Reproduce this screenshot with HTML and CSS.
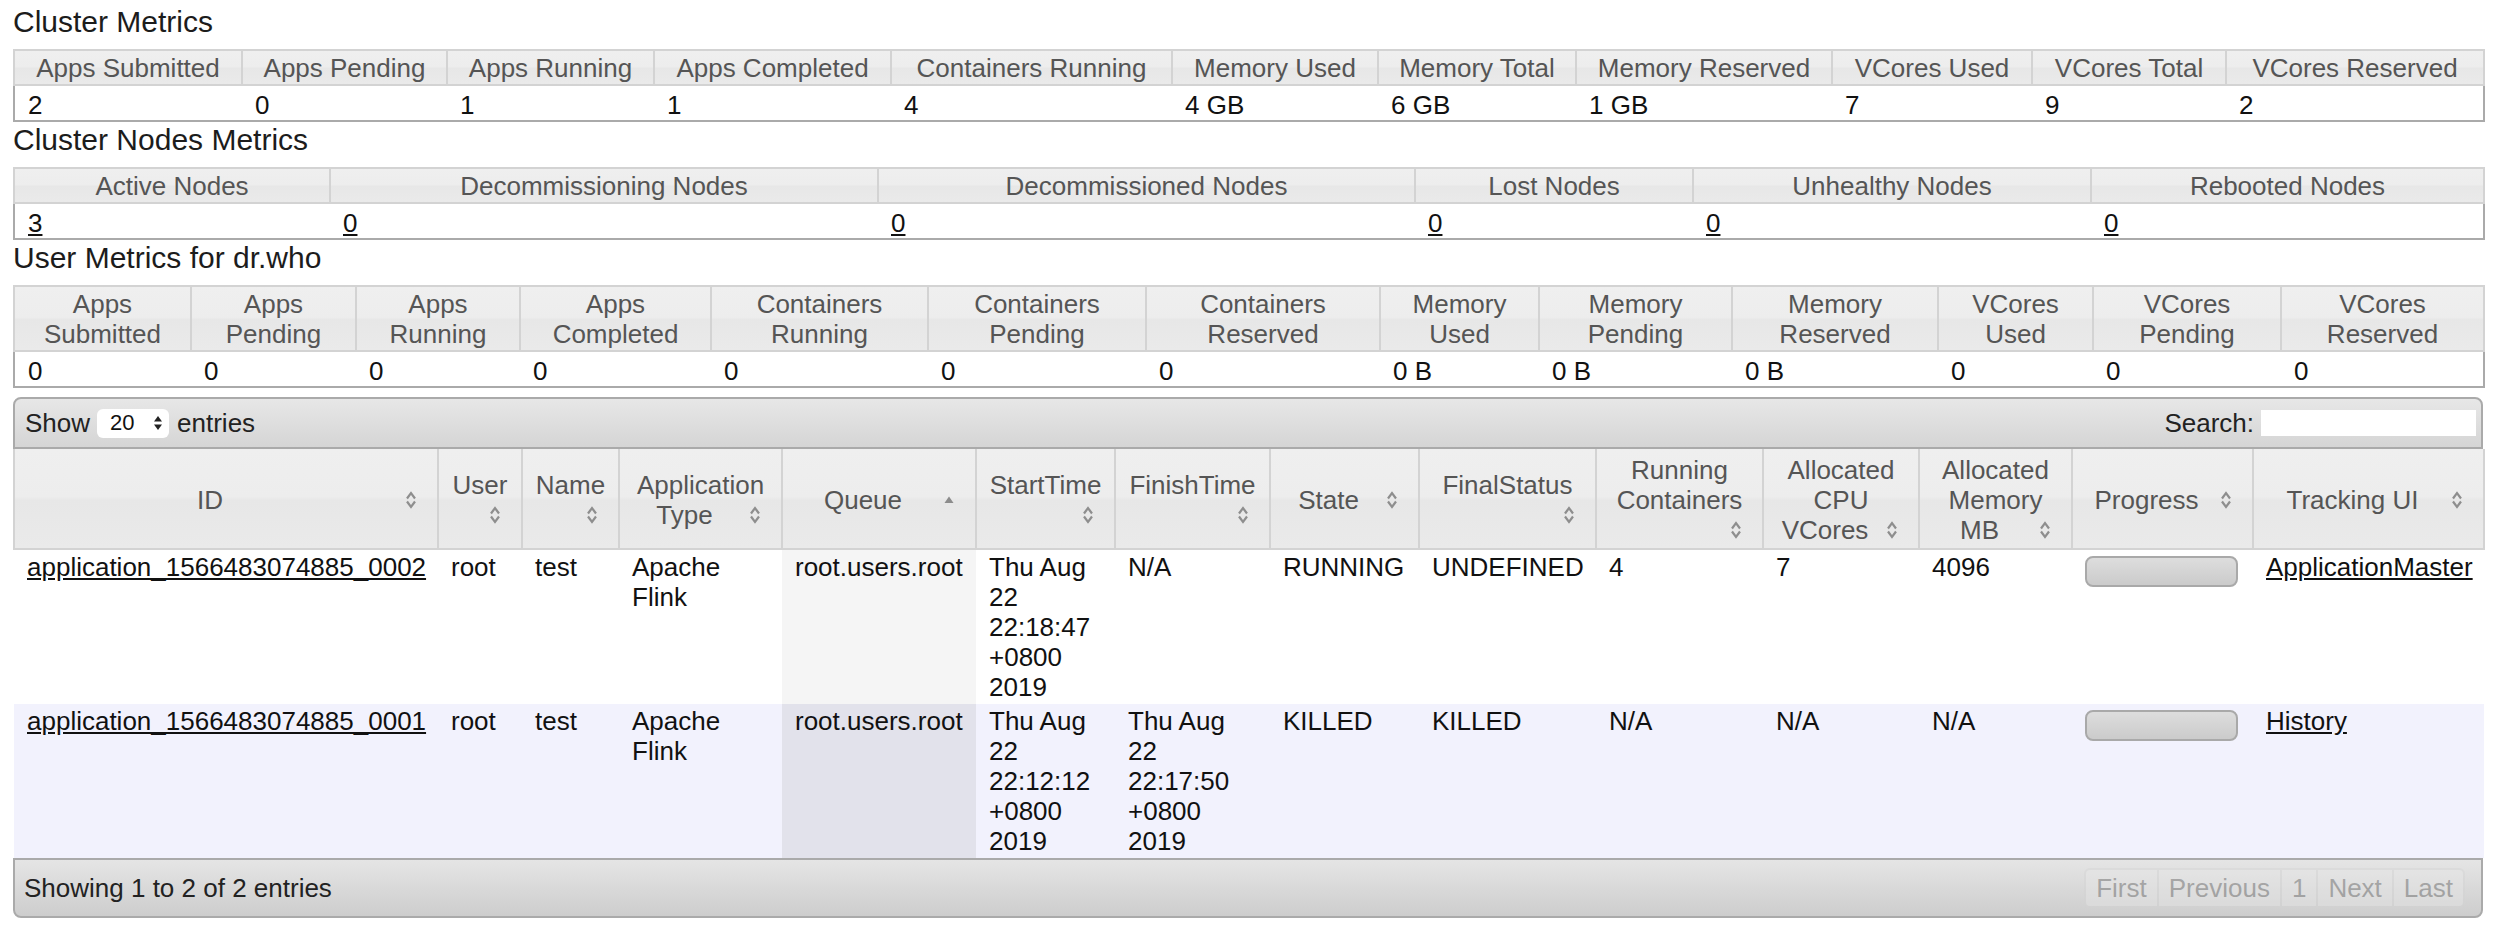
FILE: index.html
```html
<!DOCTYPE html>
<html lang="en">
<head>
<meta charset="utf-8">
<title>All Applications</title>
<link rel="stylesheet" href="styles.css">
</head>
<body>
<div class="page">
  <h3 class="section-title">Cluster Metrics</h3>
  <table class="info cluster">
    <colgroup><col><col><col><col><col><col><col><col><col><col><col></colgroup>
    <thead>
      <tr>
        <th>Apps Submitted</th><th>Apps Pending</th><th>Apps Running</th><th>Apps Completed</th><th>Containers Running</th><th>Memory Used</th><th>Memory Total</th><th>Memory Reserved</th><th>VCores Used</th><th>VCores Total</th><th>VCores Reserved</th>
      </tr>
    </thead>
    <tbody>
      <tr>
        <td>2</td><td>0</td><td>1</td><td>1</td><td>4</td><td>4 GB</td><td>6 GB</td><td>1 GB</td><td>7</td><td>9</td><td>2</td>
      </tr>
    </tbody>
  </table>

  <h3 class="section-title">Cluster Nodes Metrics</h3>
  <table class="info nodes">
    <colgroup><col><col><col><col><col><col></colgroup>
    <thead>
      <tr>
        <th>Active Nodes</th><th>Decommissioning Nodes</th><th>Decommissioned Nodes</th><th>Lost Nodes</th><th>Unhealthy Nodes</th><th>Rebooted Nodes</th>
      </tr>
    </thead>
    <tbody>
      <tr>
        <td><a href="#">3</a></td><td><a href="#">0</a></td><td><a href="#">0</a></td><td><a href="#">0</a></td><td><a href="#">0</a></td><td><a href="#">0</a></td>
      </tr>
    </tbody>
  </table>

  <h3 class="section-title">User Metrics for dr.who</h3>
  <table class="info users">
    <colgroup><col><col><col><col><col><col><col><col><col><col><col><col><col></colgroup>
    <thead>
      <tr>
        <th>Apps Submitted</th><th>Apps Pending</th><th>Apps Running</th><th>Apps Completed</th><th>Containers Running</th><th>Containers Pending</th><th>Containers Reserved</th><th>Memory Used</th><th>Memory Pending</th><th>Memory Reserved</th><th>VCores Used</th><th>VCores Pending</th><th>VCores Reserved</th>
      </tr>
    </thead>
    <tbody>
      <tr>
        <td>0</td><td>0</td><td>0</td><td>0</td><td>0</td><td>0</td><td>0</td><td>0 B</td><td>0 B</td><td>0 B</td><td>0</td><td>0</td><td>0</td>
      </tr>
    </tbody>
  </table>

  <div class="dt-wrapper">
    <div class="dt-top">
      <div class="dt-length">Show <span class="select">20 <svg class="select-arrows" width="10" height="18" viewBox="0 0 10 18"><polygon points="1,7.5 5,2 9,7.5" /><polygon points="1,10.5 5,16 9,10.5" /></svg></span> entries</div>
      <div class="dt-filter">Search: <span class="search-box"></span></div>
    </div>
    <table class="apps">
      <colgroup><col><col><col><col><col><col><col><col><col><col><col><col><col><col></colgroup>
      <thead>
        <tr>
          <th>ID<span class="sort"><svg width="32" height="30" viewBox="0 0 32 30"><polyline points="12,13.5 16,8 20,13.5" /><polyline points="12,16.5 16,22 20,16.5" /></svg></span></th>
          <th>User<span class="sort"><svg width="32" height="30" viewBox="0 0 32 30"><polyline points="12,13.5 16,8 20,13.5" /><polyline points="12,16.5 16,22 20,16.5" /></svg></span></th>
          <th>Name<span class="sort"><svg width="32" height="30" viewBox="0 0 32 30"><polyline points="12,13.5 16,8 20,13.5" /><polyline points="12,16.5 16,22 20,16.5" /></svg></span></th>
          <th>Application Type<span class="sort"><svg width="32" height="30" viewBox="0 0 32 30"><polyline points="12,13.5 16,8 20,13.5" /><polyline points="12,16.5 16,22 20,16.5" /></svg></span></th>
          <th>Queue<span class="sort"><svg width="32" height="30" viewBox="0 0 32 30"><polygon class="asc" points="11.5,18 16,11.5 20.5,18" /></svg></span></th>
          <th>StartTime<span class="sort"><svg width="32" height="30" viewBox="0 0 32 30"><polyline points="12,13.5 16,8 20,13.5" /><polyline points="12,16.5 16,22 20,16.5" /></svg></span></th>
          <th>FinishTime<span class="sort"><svg width="32" height="30" viewBox="0 0 32 30"><polyline points="12,13.5 16,8 20,13.5" /><polyline points="12,16.5 16,22 20,16.5" /></svg></span></th>
          <th>State<span class="sort"><svg width="32" height="30" viewBox="0 0 32 30"><polyline points="12,13.5 16,8 20,13.5" /><polyline points="12,16.5 16,22 20,16.5" /></svg></span></th>
          <th>FinalStatus<span class="sort"><svg width="32" height="30" viewBox="0 0 32 30"><polyline points="12,13.5 16,8 20,13.5" /><polyline points="12,16.5 16,22 20,16.5" /></svg></span></th>
          <th>Running Containers<span class="sort"><svg width="32" height="30" viewBox="0 0 32 30"><polyline points="12,13.5 16,8 20,13.5" /><polyline points="12,16.5 16,22 20,16.5" /></svg></span></th>
          <th>Allocated CPU VCores<span class="sort"><svg width="32" height="30" viewBox="0 0 32 30"><polyline points="12,13.5 16,8 20,13.5" /><polyline points="12,16.5 16,22 20,16.5" /></svg></span></th>
          <th>Allocated Memory MB<span class="sort"><svg width="32" height="30" viewBox="0 0 32 30"><polyline points="12,13.5 16,8 20,13.5" /><polyline points="12,16.5 16,22 20,16.5" /></svg></span></th>
          <th>Progress<span class="sort"><svg width="32" height="30" viewBox="0 0 32 30"><polyline points="12,13.5 16,8 20,13.5" /><polyline points="12,16.5 16,22 20,16.5" /></svg></span></th>
          <th>Tracking UI<span class="sort"><svg width="32" height="30" viewBox="0 0 32 30"><polyline points="12,13.5 16,8 20,13.5" /><polyline points="12,16.5 16,22 20,16.5" /></svg></span></th>
        </tr>
      </thead>
      <tbody>
        <tr class="odd">
          <td><a href="#">application_1566483074885_0002</a></td>
          <td>root</td>
          <td>test</td>
          <td>Apache Flink</td>
          <td class="sorted">root.users.root</td>
          <td>Thu Aug 22 22:18:47 +0800 2019</td>
          <td>N/A</td>
          <td>RUNNING</td>
          <td>UNDEFINED</td>
          <td>4</td>
          <td>7</td>
          <td>4096</td>
          <td><div class="progressbar"></div></td>
          <td><a href="#">ApplicationMaster</a></td>
        </tr>
        <tr class="even">
          <td><a href="#">application_1566483074885_0001</a></td>
          <td>root</td>
          <td>test</td>
          <td>Apache Flink</td>
          <td class="sorted">root.users.root</td>
          <td>Thu Aug 22 22:12:12 +0800 2019</td>
          <td>Thu Aug 22 22:17:50 +0800 2019</td>
          <td>KILLED</td>
          <td>KILLED</td>
          <td>N/A</td>
          <td>N/A</td>
          <td>N/A</td>
          <td><div class="progressbar"></div></td>
          <td><a href="#">History</a></td>
        </tr>
      </tbody>
    </table>
    <div class="dt-bottom">
      <div class="dt-info">Showing 1 to 2 of 2 entries</div>
      <div class="pager">
        <span class="pbtn first">First</span><span class="pbtn">Previous</span><span class="pbtn">1</span><span class="pbtn">Next</span><span class="pbtn last">Last</span>
      </div>
    </div>
  </div>
</div>
</body>
</html>
```

FILE: styles.css
```css
html, body {
  margin: 0;
  padding: 0;
  background: #ffffff;
}

body {
  font-family: "Liberation Sans", Arial, Helvetica, sans-serif;
  font-size: 26px;
  line-height: 30px;
  color: #111111;
}

.page {
  padding: 4px 13px 0;
}

.section-title {
  font-size: 30px;
  line-height: 34px;
  font-weight: normal;
  margin: 1px 0 10px;
  color: #1c1c1c;
}

a {
  color: #111111;
  text-decoration: underline;
}

table {
  width: 100%;
  border-collapse: collapse;
  table-layout: fixed;
}

/* metric tables */
.info {
  border: 2px solid #aaaaaa;
}

.info th,
.apps th {
  font-weight: normal;
  color: #555555;
  text-align: center;
  vertical-align: middle;
  border: 2px solid #d3d3d3;
  background: linear-gradient(#efefef 0%, #ededed 48%, #e7e7e7 52%, #eaeaea 100%);
}

.info th {
  padding: 2px 10px 1px;
}

.info td {
  padding: 4px 13px 0;
  text-align: left;
  vertical-align: top;
}

.cluster col:nth-child(1) { width: 228px; }
.cluster col:nth-child(2) { width: 205px; }
.cluster col:nth-child(3) { width: 207px; }
.cluster col:nth-child(4) { width: 237px; }
.cluster col:nth-child(5) { width: 281px; }
.cluster col:nth-child(6) { width: 206px; }
.cluster col:nth-child(7) { width: 198px; }
.cluster col:nth-child(8) { width: 256px; }
.cluster col:nth-child(9) { width: 200px; }
.cluster col:nth-child(10) { width: 194px; }
.cluster col:nth-child(11) { width: 258px; }

.nodes col:nth-child(1) { width: 316px; }
.nodes col:nth-child(2) { width: 548px; }
.nodes col:nth-child(3) { width: 537px; }
.nodes col:nth-child(4) { width: 278px; }
.nodes col:nth-child(5) { width: 398px; }
.nodes col:nth-child(6) { width: 393px; }

.users col:nth-child(1) { width: 177px; }
.users col:nth-child(2) { width: 165px; }
.users col:nth-child(3) { width: 164px; }
.users col:nth-child(4) { width: 191px; }
.users col:nth-child(5) { width: 217px; }
.users col:nth-child(6) { width: 218px; }
.users col:nth-child(7) { width: 234px; }
.users col:nth-child(8) { width: 159px; }
.users col:nth-child(9) { width: 193px; }
.users col:nth-child(10) { width: 206px; }
.users col:nth-child(11) { width: 155px; }
.users col:nth-child(12) { width: 188px; }
.users col:nth-child(13) { width: 203px; }

/* data table */
.dt-wrapper {
  margin-top: 9px;
}

.dt-top {
  display: flex;
  justify-content: space-between;
  align-items: center;
  border: 2px solid #aaaaaa;
  border-radius: 8px 8px 0 0;
  background: linear-gradient(#e7e7e7, #d5d5d5);
  padding: 9px 5px 9px 10px;
  color: #222222;
}

.dt-length,
.dt-filter {
  display: flex;
  align-items: center;
}

.select {
  display: inline-flex;
  align-items: center;
  justify-content: space-between;
  box-sizing: border-box;
  width: 72px;
  height: 29px;
  padding: 0 6px 0 13px;
  margin: 0 8px 0 7px;
  background: #ffffff;
  border-radius: 6px;
  font-size: 22px;
  color: #111111;
}

.select-arrows polygon {
  fill: #222222;
}

.search-box {
  display: inline-block;
  width: 215px;
  height: 26px;
  margin-left: 7px;
  background: #ffffff;
}

.apps th {
  border-top: none;
  padding: 6px 10px 3px;
}

.sort {
  float: right;
  width: 32px;
  height: 30px;
}

.sort svg {
  display: block;
}

.sort polyline {
  fill: none;
  stroke: #8e8e8e;
  stroke-width: 2.2;
  stroke-linejoin: miter;
}

.sort polygon.asc {
  fill: #8c8c8c;
}

.apps td {
  padding: 2px 13px;
  vertical-align: top;
  text-align: left;
}

.apps tr.odd td { background: #ffffff; }
.apps tr.even td { background: #f2f2fd; }
.apps tr.odd td.sorted { background: #f5f5f5; }
.apps tr.even td.sorted { background: #e2e2eb; }

.apps col:nth-child(1) { width: 424px; }
.apps col:nth-child(2) { width: 84px; }
.apps col:nth-child(3) { width: 97px; }
.apps col:nth-child(4) { width: 163px; }
.apps col:nth-child(5) { width: 194px; }
.apps col:nth-child(6) { width: 139px; }
.apps col:nth-child(7) { width: 155px; }
.apps col:nth-child(8) { width: 149px; }
.apps col:nth-child(9) { width: 177px; }
.apps col:nth-child(10) { width: 167px; }
.apps col:nth-child(11) { width: 156px; }
.apps col:nth-child(12) { width: 153px; }
.apps col:nth-child(13) { width: 181px; }
.apps col:nth-child(14) { width: 231px; }

.progressbar {
  width: 149px;
  height: 27px;
  margin-top: 4px;
  border: 2px solid #a9a9a9;
  border-radius: 8px;
  background: linear-gradient(#dddddd, #cbcbcb);
}

.dt-bottom {
  display: flex;
  justify-content: space-between;
  align-items: center;
  border: 2px solid #aaaaaa;
  border-radius: 0 0 8px 8px;
  background: linear-gradient(#e5e5e5, #cdcdcd);
  padding: 8px 16px 8px 9px;
  color: #222222;
}

.pager {
  display: flex;
  opacity: 0.4;
}

.pbtn {
  display: inline-block;
  padding: 3px 10px;
  border: 2px solid #d3d3d3;
  border-left: none;
  background: #e9e9e9;
  color: #555555;
}

.pbtn.first {
  border-left: 2px solid #d3d3d3;
  border-radius: 6px 0 0 6px;
}

.pbtn.last {
  border-radius: 0 6px 6px 0;
}
```
